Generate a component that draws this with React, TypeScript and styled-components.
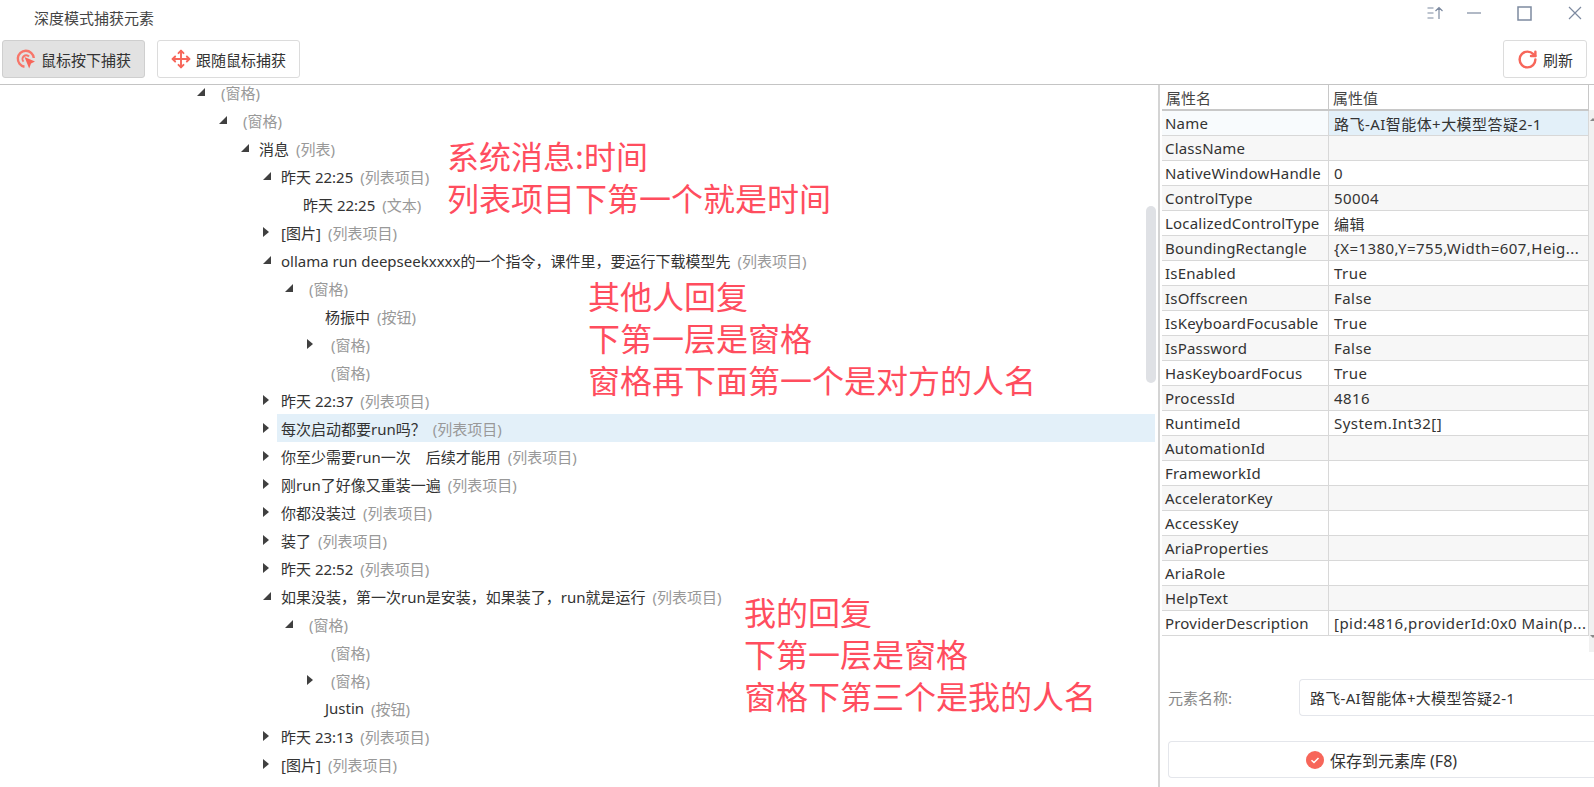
import { createGlobalStyle } from "styled-components"
import styled from "styled-components"
import { Move, RotateCw } from "lucide-react"

const GlobalStyle = createGlobalStyle`
    html, body {
        margin: 0;
        padding: 0;
        height: 100%;
        overflow: hidden;
        background: #fff;
    }

    body {
        font-family: "Noto Sans", "Noto Sans CJK SC", sans-serif;
        font-size: 15px;
        color: #333;
    }
`

const Window = styled.div`
    width: 1594px;
    height: 787px;
    display: flex;
    flex-direction: column;
    overflow: hidden;
`

const TitleBar = styled.div`
    height: 34px;
    padding: 0 12px 0 34px;
    display: flex;
    align-items: center;
    justify-content: space-between;
    flex: none;
`

const TitleText = styled.span`
    color: #444;
`

const WindowControls = styled.div`
    display: flex;
    align-items: center;
    gap: 36px;
    margin-bottom: 8px;
    color: #7d8aa0;

    svg:first-child {
        margin-right: -12px;
    }
`

const Toolbar = styled.div`
    height: 51px;
    padding: 6px 7px 0 2px;
    box-sizing: border-box;
    display: flex;
    align-items: flex-start;
    gap: 12px;
    border-bottom: 1px solid #c4c4c4;
    flex: none;
`

const ToolButton = styled.div<{ $active?: boolean; $right?: boolean }>`
    height: 38px;
    padding: 0 13px 0 13px;
    box-sizing: border-box;
    display: flex;
    align-items: center;
    gap: 5px;
    border-radius: 3px;
    border: 1px solid ${props => props.$active ? "#cfcfcf" : "#dcdcdc"};
    background: ${props => props.$active ? "#e2e2e2" : "#fff"};
    margin-left: ${props => props.$right ? "auto" : "0"};
    color: #333;
`

const Main = styled.div`
    flex: 1;
    min-height: 0;
    display: grid;
    grid-template-columns: 1160px 1fr;
`

const TreePane = styled.div`
    position: relative;
    overflow: hidden;
    border-right: 2px solid #d4d4d4;
`

const TreeList = styled.div`
    margin-top: -7px;
`

const TreeRow = styled.div<{ $level: number }>`
    height: 28px;
    display: flex;
    align-items: center;
    padding-left: ${props => 195 + props.$level * 22}px;
    padding-right: 3px;
    white-space: pre;
`

const Caret = styled.span<{ $open?: boolean; $hidden?: boolean }>`
    width: 16px;
    height: 10px;
    flex: none;
    display: flex;
    align-items: center;
    visibility: ${props => props.$hidden ? "hidden" : "visible"};

    &::before {
        content: "";
        display: block;
        margin-left: 2px;
        width: ${props => props.$open ? "8px" : "6px"};
        height: ${props => props.$open ? "8px" : "10px"};
        background: #404040;
        clip-path: ${props => props.$open
            ? "polygon(100% 0, 100% 100%, 0 100%)"
            : "polygon(0 0, 100% 50%, 0 100%)"};
    }
`

const RowBody = styled.div<{ $selected?: boolean }>`
    flex: 1;
    height: 100%;
    padding-left: 4px;
    display: flex;
    align-items: center;
    background: ${props => props.$selected ? "#e3f0f9" : "transparent"};
`

const NodeName = styled.span`
    color: #333;
`

const NodeType = styled.span<{ $pane?: boolean }>`
    color: #999;
    margin-left: ${props => props.$pane ? "6px" : "7px"};
`

const ScrollThumb = styled.div`
    position: absolute;
    top: 121px;
    right: 2px;
    width: 10px;
    height: 177px;
    border-radius: 5px;
    background: #dfe1e5;
`

const Note = styled.div<{ $left: number; $top: number }>`
    position: absolute;
    left: ${props => props.$left}px;
    top: ${props => props.$top}px;
    font-size: 32px;
    line-height: 42px;
    color: #ff4d5e;
    white-space: nowrap;
    font-family: "Noto Sans CJK SC", sans-serif;
`

const SidePane = styled.div`
    display: flex;
    flex-direction: column;
    min-width: 0;
`

const TableWrap = styled.div`
    height: 567px;
    margin-left: 2px;
    display: flex;
    flex: none;
`

const PropTable = styled.div`
    flex: 1;
    min-width: 0;
`

const TableScroll = styled.div`
    width: 5px;
    margin-top: 25px;
    background: #f1f1f1;
    flex: none;
    display: flex;
    flex-direction: column;
    justify-content: space-between;
    padding: 8px 0 14px;
    overflow: hidden;

    &::before,
    &::after {
        content: "";
        display: block;
        width: 6px;
        height: 3px;
        margin-left: 1px;
        background: #888;
    }

    &::before {
        clip-path: polygon(50% 0, 100% 100%, 0 100%);
    }

    &::after {
        clip-path: polygon(0 0, 100% 0, 50% 100%);
    }
`

const HeaderRow = styled.div`
    display: grid;
    grid-template-columns: 167px 1fr;
    height: 26px;
    box-sizing: border-box;
    align-items: center;
    border-bottom: 2px solid #c8c8c8;
`

const HeaderCell = styled.div`
    height: 100%;
    padding-left: 4px;
    display: flex;
    align-items: center;
    border-right: 1px solid #c8c8c8;
    color: #444;
`

const PropRow = styled.div<{ $shade: boolean }>`
    display: grid;
    grid-template-columns: 167px 1fr;
    height: 25px;
    box-sizing: border-box;
    border-bottom: 1px solid #d8d8d8;
    background: ${props => props.$shade ? "#f7f7f7" : "#fff"};
`

const PropCell = styled.div<{ $value?: boolean; $fill?: string }>`
    padding-left: ${props => props.$value ? "5px" : "3px"};
    display: flex;
    align-items: center;
    border-right: 1px solid #d8d8d8;
    white-space: nowrap;
    overflow: hidden;
    letter-spacing: ${props => props.$value ? "0.45px" : "0.2px"};
    background: ${props => props.$fill || "transparent"};
`

const Form = styled.div`
    padding: 27px 0 0 8px;
    display: flex;
    flex-direction: column;
    gap: 25px;
`

const FormRow = styled.div`
    display: grid;
    grid-template-columns: 131px 1fr;
    align-items: center;
`

const FormLabel = styled.span`
    color: #888;
`

const NameInput = styled.div`
    height: 37px;
    box-sizing: border-box;
    border: 1px solid #e4e6eb;
    border-right: none;
    border-radius: 4px 0 0 4px;
    padding-left: 10px;
    display: flex;
    align-items: center;
    letter-spacing: 0.3px;
    color: #333;
`

const SaveButton = styled.div`
    height: 37px;
    box-sizing: border-box;
    border: 1px solid #e4e6eb;
    border-right: none;
    border-radius: 4px 0 0 4px;
    display: flex;
    align-items: center;
    justify-content: center;
    gap: 6px;
    font-size: 16px;
    color: #333;
`

interface Node {
    level: number
    name?: string
    type: string
    caret?: "open" | "closed"
    selected?: boolean
}

const nodes: Node[] = [
    { level: 0, type: "(窗格)", caret: "open" },
    { level: 1, type: "(窗格)", caret: "open" },
    { level: 2, name: "消息", type: "(列表)", caret: "open" },
    { level: 3, name: "昨天 22:25", type: "(列表项目)", caret: "open" },
    { level: 4, name: "昨天 22:25", type: "(文本)" },
    { level: 3, name: "[图片]", type: "(列表项目)", caret: "closed" },
    { level: 3, name: "ollama run deepseekxxxx的一个指令，课件里，要运行下载模型先", type: "(列表项目)", caret: "open" },
    { level: 4, type: "(窗格)", caret: "open" },
    { level: 5, name: "杨振中", type: "(按钮)" },
    { level: 5, type: "(窗格)", caret: "closed" },
    { level: 5, type: "(窗格)" },
    { level: 3, name: "昨天 22:37", type: "(列表项目)", caret: "closed" },
    { level: 3, name: "每次启动都要run吗？", type: "(列表项目)", caret: "closed", selected: true },
    { level: 3, name: "你至少需要run一次　后续才能用", type: "(列表项目)", caret: "closed" },
    { level: 3, name: "刚run了好像又重装一遍", type: "(列表项目)", caret: "closed" },
    { level: 3, name: "你都没装过", type: "(列表项目)", caret: "closed" },
    { level: 3, name: "装了", type: "(列表项目)", caret: "closed" },
    { level: 3, name: "昨天 22:52", type: "(列表项目)", caret: "closed" },
    { level: 3, name: "如果没装，第一次run是安装，如果装了，run就是运行", type: "(列表项目)", caret: "open" },
    { level: 4, type: "(窗格)", caret: "open" },
    { level: 5, type: "(窗格)" },
    { level: 5, type: "(窗格)", caret: "closed" },
    { level: 5, name: "Justin", type: "(按钮)" },
    { level: 3, name: "昨天 23:13", type: "(列表项目)", caret: "closed" },
    { level: 3, name: "[图片]", type: "(列表项目)", caret: "closed" },
]

const props_: [string, string][] = [
    ["Name", "路飞-AI智能体+大模型答疑2-1"],
    ["ClassName", ""],
    ["NativeWindowHandle", "0"],
    ["ControlType", "50004"],
    ["LocalizedControlType", "编辑"],
    ["BoundingRectangle", "{X=1380,Y=755,Width=607,Heig..."],
    ["IsEnabled", "True"],
    ["IsOffscreen", "False"],
    ["IsKeyboardFocusable", "True"],
    ["IsPassword", "False"],
    ["HasKeyboardFocus", "True"],
    ["ProcessId", "4816"],
    ["RuntimeId", "System.Int32[]"],
    ["AutomationId", ""],
    ["FrameworkId", ""],
    ["AcceleratorKey", ""],
    ["AccessKey", ""],
    ["AriaProperties", ""],
    ["AriaRole", ""],
    ["HelpText", ""],
    ["ProviderDescription", "[pid:4816,providerId:0x0 Main(p..."],
]

const CaptureIcon = () => (
    <svg width="20" height="20" viewBox="0 0 20 20" fill="none">
        <path d="M8.5 17.7A8 8 0 1 1 17.8 9" stroke="#f7766a" strokeWidth="2.4" />
        <path d="M7.5 12.6A3.7 3.7 0 1 1 13 7.5" stroke="#f7766a" strokeWidth="2" />
        <path d="M8.5 8L19 12.6L15 14.5L13.2 19.5Z" fill="#f7665a" />
    </svg>
)

const SortIcon = () => (
    <svg width="16" height="14" viewBox="0 0 16 14" fill="none" stroke="currentColor" strokeWidth="1.2">
        <path d="M0.5 2H6.5M0.5 7H6.5M0.5 12H6.5M12 13V1.5M8.5 5L12 1.5L15.5 5" />
    </svg>
)

const MinimizeIcon = () => (
    <svg width="14" height="14" viewBox="0 0 14 14" fill="none" stroke="currentColor" strokeWidth="1.2">
        <path d="M0 7H14" />
    </svg>
)

const MaximizeIcon = () => (
    <svg width="15" height="15" viewBox="0 0 15 15" fill="none" stroke="currentColor" strokeWidth="1.5">
        <rect x="1" y="1" width="13" height="13" />
    </svg>
)

const CloseIcon = () => (
    <svg width="14" height="14" viewBox="0 0 14 14" fill="none" stroke="currentColor" strokeWidth="1.2">
        <path d="M1 1L13 13M13 1L1 13" />
    </svg>
)

const CheckIcon = () => (
    <svg width="18" height="18" viewBox="0 0 18 18" fill="none">
        <circle cx="9" cy="9" r="9" fill="#f7665a" />
        <path d="M5.5 9.2L8 11.5L12.5 7" stroke="#fff" strokeWidth="1.5" />
    </svg>
)

const App = () => {
    return (
        <Window>
            <GlobalStyle />
            <TitleBar>
                <TitleText>深度模式捕获元素</TitleText>
                <WindowControls>
                    <SortIcon />
                    <MinimizeIcon />
                    <MaximizeIcon />
                    <CloseIcon />
                </WindowControls>
            </TitleBar>

            <Toolbar>
                <ToolButton $active>
                    <CaptureIcon />
                    鼠标按下捕获
                </ToolButton>
                <ToolButton>
                    <Move size={20} color="#f7665a" strokeWidth={2.3} />
                    跟随鼠标捕获
                </ToolButton>
                <ToolButton $right>
                    <RotateCw size={21} color="#f7665a" strokeWidth={2.8} />
                    刷新
                </ToolButton>
            </Toolbar>

            <Main>
                <TreePane>
                    <TreeList>
                        {nodes.map((node, i) => (
                            <TreeRow key={i} $level={node.level}>
                                <Caret $open={node.caret === "open"} $hidden={!node.caret} />
                                <RowBody $selected={node.selected}>
                                    {node.name && <NodeName>{node.name}</NodeName>}
                                    <NodeType $pane={!node.name}>{node.type}</NodeType>
                                </RowBody>
                            </TreeRow>
                        ))}
                    </TreeList>
                    <ScrollThumb />
                    <Note $left={447} $top={49}>
                        系统消息:时间<br />列表项目下第一个就是时间
                    </Note>
                    <Note $left={588} $top={189}>
                        其他人回复<br />下第一层是窗格<br />窗格再下面第一个是对方的人名
                    </Note>
                    <Note $left={744} $top={505}>
                        我的回复<br />下第一层是窗格<br />窗格下第三个是我的人名
                    </Note>
                </TreePane>

                <SidePane>
                    <TableWrap>
                        <PropTable>
                            <HeaderRow>
                                <HeaderCell>属性名</HeaderCell>
                                <HeaderCell>属性值</HeaderCell>
                            </HeaderRow>
                            {props_.map(([name, value], i) => (
                                <PropRow key={name} $shade={i % 2 === 1}>
                                    <PropCell $fill={i === 0 ? "#f8fbfd" : undefined}>{name}</PropCell>
                                    <PropCell $value $fill={i === 0 ? "#e3f0f9" : undefined}>{value}</PropCell>
                                </PropRow>
                            ))}
                        </PropTable>
                        <TableScroll />
                    </TableWrap>

                    <Form>
                        <FormRow>
                            <FormLabel>元素名称:</FormLabel>
                            <NameInput>路飞-AI智能体+大模型答疑2-1</NameInput>
                        </FormRow>
                        <SaveButton>
                            <CheckIcon />
                            保存到元素库 (F8)
                        </SaveButton>
                    </Form>
                </SidePane>
            </Main>
        </Window>
    )
}

export default App
